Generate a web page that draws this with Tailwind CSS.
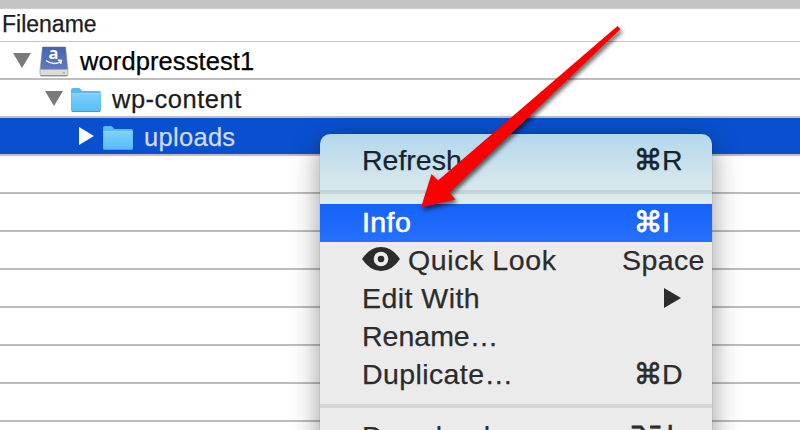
<!DOCTYPE html>
<html lang="en">
<head>
<meta charset="utf-8">
<title>Files</title>
<script src="https://cdn.jsdelivr.net/npm/@tailwindcss/browser@4"></script>
</head>
<body class="w-[800px] h-[430px] overflow-hidden bg-white font-['Liberation_Sans',Arial,sans-serif] text-black">
<svg class="absolute w-0 h-0">
  <defs>
    <linearGradient id="fold" x1="0" y1="0" x2="0" y2="1"><stop offset="0" stop-color="#7dd0fb"/><stop offset="1" stop-color="#55bdf6"/></linearGradient>
    <linearGradient id="disk" x1="0" y1="0" x2="0" y2="1"><stop offset="0" stop-color="#4862ae"/><stop offset="1" stop-color="#5f79c2"/></linearGradient>
    <symbol id="folder" viewBox="0 0 32 26">
      <path d="M1 3Q1 1 3 1H9Q10 1 11 2.500Q12 4 13 4H29Q31 4 31 6V23Q31 25 29 25H3Q1 25 1 23Z" fill="#5ab8ea"/>
      <path d="M1.500 7H30.500V22.500Q30.500 24 29 24H3Q1.500 24 1.500 22.500Z" fill="url(#fold)"/>
      <path d="M1 6.500H31" stroke="#8ad6fc"/><path d="M1 20.500H31" stroke="#64c5f8" /><path d="M2 24.500H30" stroke="#419fd3"/>
    </symbol>
  </defs>
</svg>
<div class="relative w-[800px] h-[430px] overflow-hidden">
  <main class="flex flex-col [-webkit-text-stroke:0.25px]">
    <div class="h-[9px] shrink-0 bg-[#c4c4c4] border-b border-[#cfcfcf]"></div>
    <div class="h-[33px] shrink-0 border-b border-[#c6c6c6] pl-[2px] text-[23px] leading-[31px] text-[#1c1c1c]">Filename</div>
    <div class="h-[38px] shrink-0 border-b-2 border-[#bdbdbd] flex items-center pl-[13px]">
      <svg class="w-[18px] h-[15px]" viewBox="0 0 18 15"><path d="M0 0H18L9 15Z" fill="#7a7a7a"/></svg>
      <svg class="w-[30px] h-[31px] ml-[8px] mt-[3px]" viewBox="0 0 30 31">
        <path d="M3.500 1H26.500L29 24V28Q29 30 27 30H3Q1 30 1 28V24Z" fill="#dcdcda" stroke="#999" stroke-width=".7"/>
        <path d="M3.500 1H26.500L28.600 23.500H1.400Z" fill="url(#disk)"/>
        <path d="M1.500 29.700H28.500" stroke="#8c8c8c"/><rect x="23.500" y="26" width="2.500" height="1.500" fill="#b5b48b"/>
        <text x="14.500" y="13" text-anchor="middle" font-family="Open Sans, sans-serif" font-weight="700" font-size="16.500" fill="#fff" stroke="none" class="[-webkit-text-stroke:0px]">a</text>
        <path d="M7 14.500Q14 19.800 21.500 15.800M19 14.300L22.400 14.500L21.700 17.800" fill="none" stroke="#fff" stroke-width="1.400"/>
      </svg>
      <span class="ml-[11px] text-[25.500px] tracking-[0.1px] leading-[36px] mt-[2px] whitespace-nowrap">wordpresstest1</span>
    </div>
    <div class="h-[38px] shrink-0 border-b-2 border-[#bdbdbd] flex items-center pl-[45px]">
      <svg class="w-[18px] h-[15px]" viewBox="0 0 18 15"><path d="M0 0H18L9 15Z" fill="#7a7a7a"/></svg>
      <svg class="w-[32px] h-[26px] ml-[7px] mt-[4px]"><use href="#folder"/></svg>
      <span class="ml-[10px] text-[25.500px] tracking-[0.5px] leading-[36px] mt-[2px] whitespace-nowrap text-[#1c1c1c]">wp-content</span>
    </div>
    <div class="h-[38px] shrink-0 border-b-2 border-[#bdbdbd] bg-[#0950d0] bg-clip-padding flex items-center pl-[79px]">
      <svg class="w-[15px] h-[18px]" viewBox="0 0 15 18"><path d="M0 0V18L15 9Z" fill="#fff"/></svg>
      <svg class="w-[32px] h-[26px] ml-[8px] mt-[4px]"><use href="#folder"/></svg>
      <span class="ml-[10px] text-[25.500px] tracking-[0.3px] leading-[36px] mt-[2px] whitespace-nowrap text-[#d0dcf6]">uploads</span>
    </div>
    <div class="h-[38px] shrink-0 border-b-2 border-[#bdbdbd]"></div>
    <div class="h-[38px] shrink-0 border-b-2 border-[#bdbdbd]"></div>
    <div class="h-[38px] shrink-0 border-b-2 border-[#bdbdbd]"></div>
    <div class="h-[38px] shrink-0 border-b-2 border-[#bdbdbd]"></div>
    <div class="h-[38px] shrink-0 border-b-2 border-[#bdbdbd]"></div>
    <div class="h-[38px] shrink-0 border-b-2 border-[#bdbdbd]"></div>
    <div class="h-[38px] shrink-0 border-b-2 border-[#bdbdbd]"></div>
  </main>

  <div class="absolute left-[320px] top-[134px] w-[392px] h-[340px] rounded-[10px] pt-[8px] overflow-hidden bg-[linear-gradient(to_bottom,#b4d7ee_0px,#cfe4ec_40px,#dfecea_70px,#ebebeb_72px)] text-[28.500px] leading-[36px] whitespace-nowrap [-webkit-text-stroke:0.25px] text-[#2c2c2c] flex flex-col shadow-[0_0_1px_rgba(0,0,0,.45),0_8px_28px_rgba(0,0,0,.42)]">
    <div class="h-[38px] shrink-0 flex pl-[42px] text-[#142530]">
      <span class="w-[272px]">Refresh</span>
      <span class="w-[28px] pt-[1px] text-[28.500px] font-['DejaVu_Sans'] [-webkit-text-stroke:0.6px]">⌘</span><span>R</span>
    </div>
    <div class="h-[24px] shrink-0 flex items-center"><div class="h-[4px] w-full bg-[#c3d3d8]"></div></div>
    <div class="h-[38px] shrink-0 flex pl-[42px] text-white bg-linear-to-b from-[#1662f8] to-[#2670fd]">
      <span class="w-[272px] tracking-[0.4px] [-webkit-text-stroke:0.6px]">Info</span>
      <span class="w-[28px] pt-[1px] text-[28.500px] font-['DejaVu_Sans'] [-webkit-text-stroke:0.8px]">⌘</span><span class="[-webkit-text-stroke:0.6px]">I</span>
    </div>
    <div class="h-[38px] shrink-0 flex pl-[42px]">
      <svg class="w-[38px] h-[26px] mt-[4px] shrink-0" viewBox="0 0 38 26"><path d="M0 13Q8 1 19 1T38 13Q30 25 19 25T0 13Z" fill="#2c2c2c"/><circle cx="19" cy="13" r="5.300" fill="none" stroke="#ebebeb" stroke-width="4"/></svg>
      <span class="ml-[8px] w-[214px] tracking-[0.6px]">Quick Look</span>
      <span class="tracking-[0.4px]">Space</span>
    </div>
    <div class="h-[38px] shrink-0 flex pl-[42px]">
      <span class="w-[302px] tracking-[0.45px]">Edit With</span>
      <svg class="w-[17px] h-[20px] mt-[8px]" viewBox="0 0 17 20"><path d="M0 0V20L17 10Z" fill="#2c2c2c"/></svg>
    </div>
    <div class="h-[38px] shrink-0 flex pl-[42px]">Rename…</div>
    <div class="h-[38px] shrink-0 flex pl-[42px]">
      <span class="w-[272px] tracking-[0.4px]">Duplicate…</span>
      <span class="w-[28px] pt-[1px] text-[28.500px] font-['DejaVu_Sans'] [-webkit-text-stroke:0.6px]">⌘</span><span>D</span>
    </div>
    <div class="h-[24px] shrink-0 flex items-center"><div class="h-[4px] w-full bg-[#d5d5d5]"></div></div>
    <div class="h-[38px] shrink-0 flex pl-[42px]">
      <span class="w-[268px] tracking-[0.2px]">Download</span>
      <span class="w-[29px] -mt-[3px] text-[28px] font-['DejaVu_Sans'] [-webkit-text-stroke:0.8px]">⌥</span><span class="text-[27px] font-['DejaVu_Sans'] [-webkit-text-stroke:0.8px]">↓</span>
    </div>
  </div>

  <svg class="absolute left-0 top-0 w-[800px] h-[430px] drop-shadow-[2px_3px_2px_rgba(0,0,0,.6)]" viewBox="0 0 800 430">
    <path d="M421 207.500L431.500 174L438 180.500L617.500 26L620.500 29L449.500 192.500L455.500 199.500Z" fill="#fb0000"/>
  </svg>
</div>
</body>
</html>
